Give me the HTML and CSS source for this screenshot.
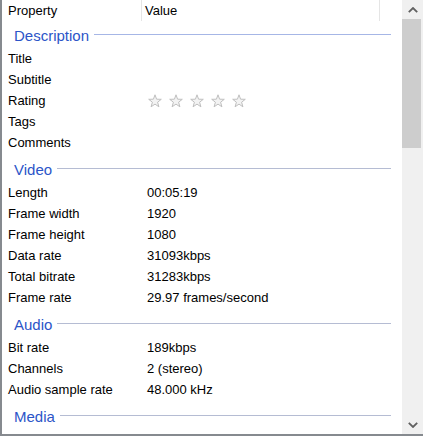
FILE: index.html
```html
<!DOCTYPE html>
<html>
<head>
<meta charset="utf-8">
<link rel="stylesheet" href="styles.css">
</head>
<body>
<div class="window">
  <div class="list">
    <div class="header">
      <div class="hcol c1">Property</div>
      <div class="hcol c2">Value</div>
      <div class="hcol c3"></div>
    </div>
    <div class="body">
      <div class="group first"><span class="gtitle">Description</span><span class="rule blue"></span></div>
      <div class="row"><span class="k">Title</span><span class="v"></span></div>
      <div class="row"><span class="k">Subtitle</span><span class="v"></span></div>
      <div class="row"><span class="k">Rating</span><span class="v stars">
        <svg class="star" viewBox="0 0 14 14"><polygon points="7,0.8 8.6,5.2 13.3,5.3 9.6,8.2 10.9,12.8 7,10.1 3.1,12.8 4.4,8.2 0.7,5.3 5.4,5.2"/></svg>
        <svg class="star" viewBox="0 0 14 14"><polygon points="7,0.8 8.6,5.2 13.3,5.3 9.6,8.2 10.9,12.8 7,10.1 3.1,12.8 4.4,8.2 0.7,5.3 5.4,5.2"/></svg>
        <svg class="star" viewBox="0 0 14 14"><polygon points="7,0.8 8.6,5.2 13.3,5.3 9.6,8.2 10.9,12.8 7,10.1 3.1,12.8 4.4,8.2 0.7,5.3 5.4,5.2"/></svg>
        <svg class="star" viewBox="0 0 14 14"><polygon points="7,0.8 8.6,5.2 13.3,5.3 9.6,8.2 10.9,12.8 7,10.1 3.1,12.8 4.4,8.2 0.7,5.3 5.4,5.2"/></svg>
        <svg class="star" viewBox="0 0 14 14"><polygon points="7,0.8 8.6,5.2 13.3,5.3 9.6,8.2 10.9,12.8 7,10.1 3.1,12.8 4.4,8.2 0.7,5.3 5.4,5.2"/></svg>
      </span></div>
      <div class="row"><span class="k">Tags</span><span class="v"></span></div>
      <div class="row"><span class="k">Comments</span><span class="v"></span></div>

      <div class="group"><span class="gtitle">Video</span><span class="rule"></span></div>
      <div class="row"><span class="k">Length</span><span class="v">00:05:19</span></div>
      <div class="row"><span class="k">Frame width</span><span class="v">1920</span></div>
      <div class="row"><span class="k">Frame height</span><span class="v">1080</span></div>
      <div class="row"><span class="k">Data rate</span><span class="v">31093kbps</span></div>
      <div class="row"><span class="k">Total bitrate</span><span class="v">31283kbps</span></div>
      <div class="row"><span class="k">Frame rate</span><span class="v">29.97 frames/second</span></div>

      <div class="group"><span class="gtitle">Audio</span><span class="rule"></span></div>
      <div class="row"><span class="k">Bit rate</span><span class="v">189kbps</span></div>
      <div class="row"><span class="k">Channels</span><span class="v">2 (stereo)</span></div>
      <div class="row"><span class="k">Audio sample rate</span><span class="v">48.000 kHz</span></div>

      <div class="group"><span class="gtitle">Media</span><span class="rule"></span></div>
    </div>
  </div>
  <div class="scrollbar">
    <div class="sbtn">
      <svg width="10" height="6" viewBox="0 0 10 6"><polyline points="0.8,5.2 5,1 9.2,5.2" fill="none" stroke="#606060" stroke-width="1.8"/></svg>
    </div>
    <div class="track">
      <div class="thumb"></div>
    </div>
    <div class="sbtn">
      <svg width="10" height="6" viewBox="0 0 10 6"><polyline points="0.8,0.8 5,5 9.2,0.8" fill="none" stroke="#606060" stroke-width="1.8"/></svg>
    </div>
  </div>
</div>
</body>
</html>
```

FILE: styles.css
```css
html, body {
  margin: 0;
  padding: 0;
  background: #ffffff;
}

.window {
  width: 423px;
  height: 436px;
  box-sizing: border-box;
  border-left: 2px solid #868a8f;
  border-bottom: 2px solid #868a8f;
  display: flex;
  overflow: hidden;
  font-family: "Liberation Sans", Arial, sans-serif;
  font-size: 13px;
  color: #000000;
}

.list {
  width: 400px;
  height: 434px;
  overflow: hidden;
  display: flex;
  flex-direction: column;
}

.header {
  height: 22px;
  display: flex;
  flex: none;
}

.hcol {
  height: 21px;
  line-height: 21px;
  box-sizing: border-box;
}

.c1 {
  width: 140px;
  padding-left: 6px;
  border-right: 1px solid #e5e5e5;
}

.c2 {
  width: 238px;
  padding-left: 3px;
  border-right: 1px solid #e5e5e5;
}

.c3 {
  flex: 1;
}

.body {
  display: flex;
  flex-direction: column;
}

.group {
  height: 24px;
  margin-top: 3px;
  margin-bottom: 2px;
  display: flex;
  align-items: center;
  padding-left: 12px;
  flex: none;
}

.group.first {
  margin-top: 0;
}

.gtitle {
  font-size: 15px;
  line-height: 20px;
  height: 24px;
  box-sizing: border-box;
  padding-top: 4px;
  color: #2c55c8;
}

.rule {
  flex: 1;
  height: 1px;
  margin-left: 5px;
  margin-right: 11px;
  background: #b5bcd3;
}

.rule.blue {
  background: #a6b6e6;
}

.row {
  height: 21px;
  line-height: 21px;
  display: flex;
  flex: none;
}

.k {
  width: 139px;
  padding-left: 6px;
  box-sizing: border-box;
  flex: none;
}

.v {
  padding-left: 6px;
  flex: 1;
}

.stars {
  display: flex;
  align-items: center;
  padding-left: 7px;
  gap: 7px;
}

.star {
  width: 14px;
  height: 14px;
  display: block;
}

.star polygon {
  fill: #f3f3f3;
  stroke: #bfbfbf;
  stroke-width: 1;
  stroke-linejoin: round;
}

.scrollbar {
  width: 21px;
  height: 434px;
  background: #f0f0f0;
  display: flex;
  flex-direction: column;
  flex: none;
}

.sbtn {
  height: 19px;
  display: flex;
  align-items: center;
  justify-content: center;
  flex: none;
}

.track {
  flex: 1;
}

.thumb {
  width: 19px;
  height: 129px;
  background: #cdcdcd;
}
```
